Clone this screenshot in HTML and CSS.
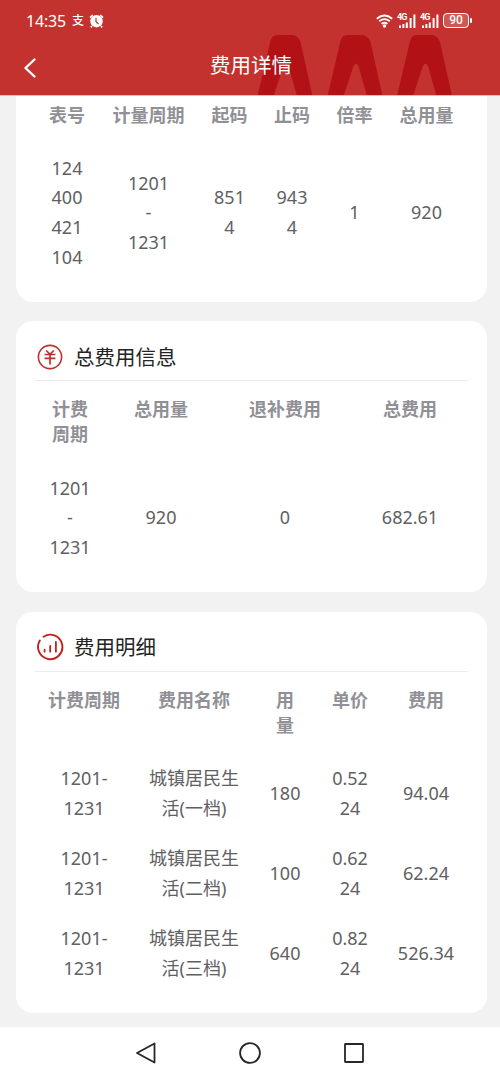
FILE: index.html
```html
<!DOCTYPE html>
<html lang="zh-CN">
<head>
<meta charset="utf-8">
<title>费用详情</title>
<link rel="stylesheet" href="styles.css">
</head>
<body>
<div class="app">
  <header class="header">
    <svg class="pattern" width="500" height="95" viewBox="0 0 500 95">
      <defs><path id="peak" d="M0 96 L13 41 Q14.500 35 20 35 H35 Q41 36 43 42 L55 96 H39.500 L31 66 Q28.500 61 26 66 L16 96 Z"/></defs>
      <use href="#peak" x="257.500"/><use href="#peak" x="327.500"/><use href="#peak" x="397"/>
    </svg>
    <div class="status">
      <div class="status-left">
        <span class="clock">14:35</span>
        <span class="pay">支</span>
        <svg width="15" height="14" viewBox="0 0 15 14"><circle cx="7.500" cy="7.200" r="6.200" fill="#fff"/><path d="M1 3.600 L3.800 1M14 3.600 L11.200 1M3 12l-1.200 1.400M12 12l1.200 1.400" stroke="#fff" stroke-width="1.700"/><path d="M7 3.800V7.500L9.400 10" fill="none" stroke="#c3322e" stroke-width="1.200"/></svg>
      </div>
      <div class="status-right">
        <svg width="17" height="14" viewBox="0 0 17 14"><g fill="none" stroke="#fff" stroke-width="1.800"><path d="M.8 4.700Q8.500-1.700 16.200 4.700"/><path d="M3.200 7.300Q8.500 3 13.800 7.300"/><path d="M5.600 9.900Q8.500 7.500 11.400 9.900"/></g><circle cx="8.500" cy="12" r="1.800" fill="#fff"/></svg>
        <div class="signal"><span>4G</span><svg width="19" height="14" viewBox="0 0 19 14"><path d="M3 11.500v2.500M6.400 10v4M9.800 8.500v5.500M13.600 4V14M17.400 .5V14" stroke="#fff" stroke-width="2"/></svg></div>
        <div class="signal"><span>4G</span><svg width="19" height="14" viewBox="0 0 19 14"><path d="M3 11.500v2.500M6.400 10v4M9.800 8.500v5.500M13.600 4V14M17.400 .5V14" stroke="#fff" stroke-width="2"/></svg></div>
        <div class="battery"><span class="level">90</span><i class="tip"></i></div>
      </div>
    </div>
    <div class="titlebar">
      <svg class="back" width="14" height="22" viewBox="0 0 14 22"><path d="M11.500 2.500 L2.500 11 L11.500 19.500" fill="none" stroke="#fff" stroke-width="2.400" stroke-linecap="round" stroke-linejoin="round"/></svg>
      <h1 class="title">费用详情</h1>
    </div>
  </header>

  <main class="content">
    <section class="card card-meter">
      <div class="row head meter"><div>表号</div><div>计量周期</div><div>起码</div><div>止码</div><div>倍率</div><div>总用量</div></div>
      <div class="row meter"><div>124<br>400<br>421<br>104</div><div>1201<br>-<br>1231</div><div>851<br>4</div><div>943<br>4</div><div>1</div><div>920</div></div>
    </section>

    <section class="card">
      <div class="card-title">
        <svg width="28" height="28" viewBox="0 0 28 28" fill="none" stroke="#c0302a"><circle cx="14" cy="14" r="11.600" stroke-width="1.600"/><path d="M10.200 7.500L14 11.300L17.800 7.500M8.600 11.500H19.400M8.600 15.400H19.400M14 11.300V21.500" stroke-width="1.700"/></svg>
        <h2>总费用信息</h2>
      </div>
      <div class="row head total"><div>计费<br>周期</div><div>总用量</div><div>退补费用</div><div>总费用</div></div>
      <div class="row total"><div>1201<br>-<br>1231</div><div>920</div><div>0</div><div>682.61</div></div>
    </section>

    <section class="card">
      <div class="card-title">
        <svg width="28" height="28" viewBox="0 0 28 28" fill="none" stroke="#c0221e" stroke-linecap="round"><path d="M7.600 3.700A12.200 12.200 0 1 1 3.800 7.600" stroke-width="1.900"/><path d="M8.600 16.700V18.700M14.200 13V18.700M19.900 9V18.700" stroke-width="1.800"/></svg>
        <h2>费用明细</h2>
      </div>
      <div class="row head detail"><div>计费周期</div><div>费用名称</div><div>用<br>量</div><div>单价</div><div>费用</div></div>
      <div class="row detail"><div>1201-<br>1231</div><div>城镇居民生<br>活(一档)</div><div>180</div><div>0.52<br>24</div><div>94.04</div></div>
      <div class="row detail"><div>1201-<br>1231</div><div>城镇居民生<br>活(二档)</div><div>100</div><div>0.62<br>24</div><div>62.24</div></div>
      <div class="row detail"><div>1201-<br>1231</div><div>城镇居民生<br>活(三档)</div><div>640</div><div>0.82<br>24</div><div>526.34</div></div>
    </section>
  </main>

  <nav class="navbar">
    <svg width="22" height="24" viewBox="0 0 22 24"><path d="M19.500 2.500V21.500L2 12Z"/></svg>
    <svg width="24" height="24" viewBox="0 0 24 24"><circle cx="12" cy="12" r="9.900"/></svg>
    <svg width="22" height="24" viewBox="0 0 22 24"><rect x="2" y="3" width="18" height="18" rx=".5"/></svg>
  </nav>
</div>
</body>
</html>
```
FILE: styles.css
```css
* { box-sizing: border-box; }
body {
  margin: 0;
  font-family: "Noto Sans", "Noto Sans CJK SC", sans-serif;
  background: #f2f2f2;
}
.app {
  width: 500px;
  height: 1079px;
  display: flex;
  flex-direction: column;
  overflow: hidden;
}
.header {
  position: relative;
  flex: none;
  height: 96px;
  background: #c3322e;
  border-bottom: 1px solid #f3b5ae;
  color: #fff;
}
.pattern { position: absolute; top: 0; left: 0; fill: #b21116; }
.status {
  position: relative;
  height: 40px;
  padding: 1px 28px 0 26px;
  display: flex;
  align-items: center;
  justify-content: space-between;
}
.status-left, .status-right { display: flex; align-items: center; }
.status-left { gap: 5px; }
.status-right { gap: 4px; }
.status svg { display: block; }
.clock { font-size: 16px; line-height: 20px; width: 41px; white-space: nowrap; letter-spacing: -.2px; }
.pay { font-size: 12px; line-height: 16px; font-weight: 500; }
.signal { position: relative; }
.signal span {
  position: absolute;
  left: 0;
  top: -1px;
  font: 700 9px/9px "Roboto", sans-serif;
  letter-spacing: -.9px;
}
.battery { display: flex; align-items: center; gap: 1px; }
.level {
  width: 26px;
  height: 15px;
  border: 1.500px solid #fff;
  border-radius: 4px;
  background: #cd5955;
  font: 500 12px/13px "Roboto", sans-serif;
  text-align: center;
}
.tip { width: 2px; height: 5px; background: #fff; border-radius: 1px; }
.titlebar {
  position: relative;
  height: 55px;
  display: grid;
  grid-template-columns: 60px 1fr 60px;
  padding-left: 2px;
}
.back { margin: 17px 0 0 21px; }
.title {
  margin: 10px 0 0;
  font-size: 20.500px;
  line-height: 30px;
  font-weight: 400;
  text-align: center;
}
.content {
  flex: none;
  height: 931px;
  padding: 0 13px 0 16px;
  display: flex;
  flex-direction: column;
  gap: 19.500px;
}
.card {
  flex: none;
  background: #fff;
  border-radius: 17px;
  padding: 0 19px 19.500px;
}
.card-meter { border-radius: 0 0 17px 17px; padding-top: 6.500px; }
.card-title {
  height: 60px;
  padding-top: 12px;
  display: flex;
  align-items: center;
  gap: 10px;
  border-bottom: 1px solid #ececec;
  margin-bottom: 16px;
}
.card-title svg { margin-left: 1px; flex: none; }
.card-title h2 {
  margin: 0;
  font-size: 20.500px;
  line-height: 30px;
  font-weight: 400;
  color: #242424;
}
.row {
  display: grid;
  align-items: center;
  text-align: center;
  color: #606062;
  font-size: 18px;
  line-height: 29.600px;
  padding: 10.300px 0;
  white-space: nowrap;
}
.head {
  align-items: start;
  color: #909096;
  font-weight: 700;
  line-height: 25px;
  padding: 0 0 16px;
}
.meter { grid-template-columns: 64px 99px 63px 62px 63px 81px; }
.total { grid-template-columns: 70px 112px 136px 114px; }
.detail { grid-template-columns: 98px 122px 60px 70px 82px; }
.detail:not(.head) { padding: 10.400px 0; }
.navbar {
  flex: none;
  height: 52px;
  background: #fff;
  display: flex;
  justify-content: center;
  gap: 81px;
  padding-top: 13.500px;
}
.navbar svg {
  fill: none;
  stroke: #262626;
  stroke-width: 1.800;
  stroke-linejoin: round;
}
```
